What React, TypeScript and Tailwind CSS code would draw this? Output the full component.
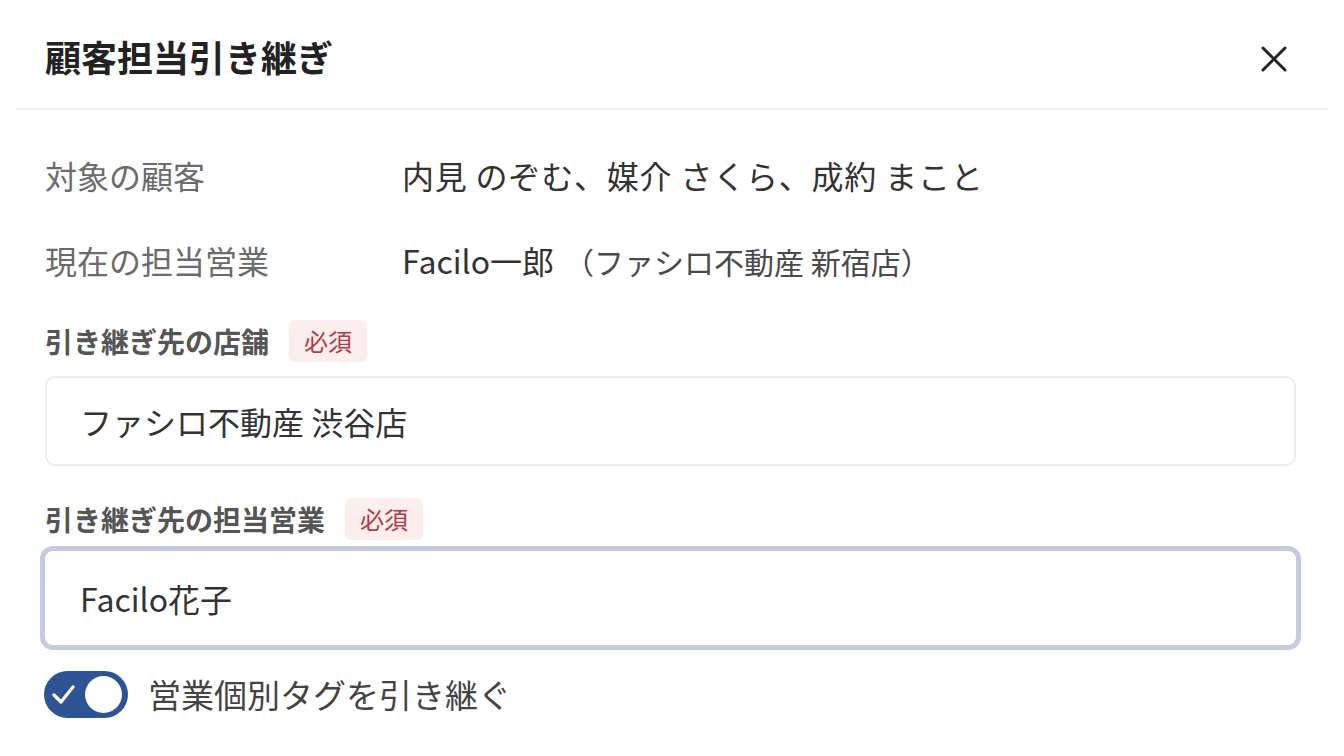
import React from "react";

const font = { fontFamily: '"Noto Sans CJK JP", "Noto Sans", sans-serif' };

function RequiredBadge() {
  return (
    <span className="ml-[20px] inline-flex h-[42px] w-[78px] items-center justify-center rounded-[6px] bg-[#fdeeee] text-[24px] text-[#b23a48]">
      必須
    </span>
  );
}

function InfoRow({ label, children }: { label: string; children: React.ReactNode }) {
  return (
    <div className="flex h-[85px] items-center text-[32px]">
      <div className="w-[357px] shrink-0 text-[#6b6b6b]">{label}</div>
      <div className="text-[#333333]">{children}</div>
    </div>
  );
}

export default function App() {
  return (
    <div className="h-[756px] w-full overflow-hidden bg-white" style={font}>
      {/* header */}
      <div className="mx-[16px] flex h-[110px] items-center justify-between border-b-2 border-[#efefef] pl-[29px] pr-[40px] pt-[4px]">
        <h1 className="text-[36px] font-bold leading-none text-[#222222]">顧客担当引き継ぎ</h1>
        <button className="mt-[6px] flex h-[28px] w-[28px] items-center justify-center text-[#222222]" aria-label="close">
          <svg width="26" height="26" viewBox="0 0 26 26" fill="none" stroke="currentColor" strokeWidth="3" strokeLinecap="round">
            <path d="M2 2 L24 24 M24 2 L2 24" />
          </svg>
        </button>
      </div>

      <div className="flex flex-col pl-[45px] pr-[48px] pt-[22px]">
        <InfoRow label="対象の顧客">
          <span className="tracking-[0.8px]">内見 のぞむ、媒介 さくら、成約 まこと</span>
        </InfoRow>
        <InfoRow label="現在の担当営業">
          Facilo一郎<span className="ml-[10px] text-[30px] text-[#4a4a4a]">（ファシロ不動産 新宿店）</span>
        </InfoRow>

        {/* destination store */}
        <div className="mt-[18px] flex items-center">
          <span className="text-[28px] font-bold text-[#555555]">引き継ぎ先の店舗</span>
          <RequiredBadge />
        </div>
        <div className="mt-[14px] flex h-[90px] items-center rounded-[10px] border-2 border-[#ececec] pl-[33px] text-[32px] text-[#333333]">
          ファシロ不動産 渋谷店
        </div>

        {/* destination staff */}
        <div className="mt-[32px] flex items-center">
          <span className="text-[28px] font-bold text-[#555555]">引き継ぎ先の担当営業</span>
          <RequiredBadge />
        </div>
        <div className="-mx-[5px] mt-[6px] flex h-[104px] items-center rounded-[13px] border-[5px] border-[#c5cbdc] pl-[35px] text-[32px] text-[#333333]">
          Facilo花子
        </div>

        {/* toggle */}
        <div className="mt-[20px] flex items-center">
          <div className="relative h-[47px] w-[84px] -ml-[1px] rounded-full bg-[#2f5496]">
            <svg className="absolute left-[8px] top-[13px]" width="24" height="22" viewBox="0 0 24 22" fill="none" stroke="white" strokeWidth="3.2" strokeLinecap="round" strokeLinejoin="round">
              <path d="M2 11 L9 18 L21 3" />
            </svg>
            <div className="absolute right-[6px] top-[5px] h-[37px] w-[37px] rounded-full bg-white" />
          </div>
          <span className="ml-[20px] text-[33px] text-[#444444]">営業個別タグを引き継ぐ</span>
        </div>
      </div>
    </div>
  );
}
